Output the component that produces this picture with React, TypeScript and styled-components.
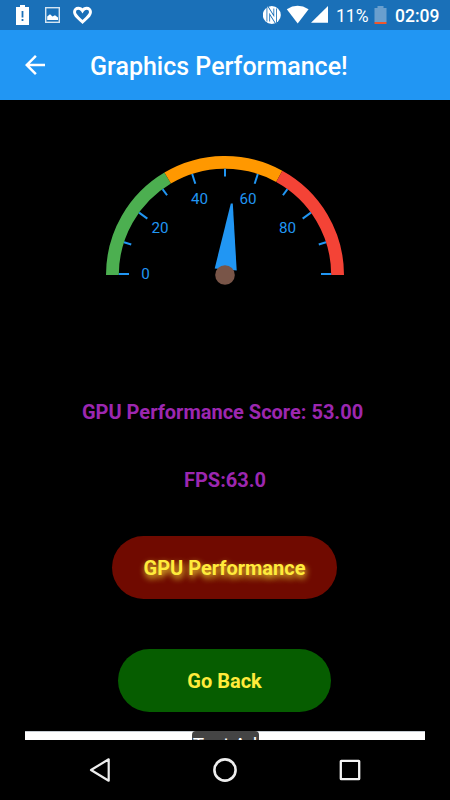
import React from "react";
import styled, { createGlobalStyle } from "styled-components";

const GlobalStyle = createGlobalStyle`
  * { box-sizing: border-box; }
  body { margin: 0; background: #000; font-family: Roboto, sans-serif; }
  svg { display: block; flex: none; }
`;

const Screen = styled.div`
  width: 450px;
  height: 800px;
  display: flex;
  flex-direction: column;
  overflow: hidden;
  background: #000;
`;

const StatusBar = styled.header`
  height: 30px;
  flex: none;
  display: flex;
  align-items: center;
  justify-content: space-between;
  padding: 0 10px 0 15px;
  background: #1a70b8;
  color: #fff;
`;

const StatusGroup = styled.div`
  display: flex;
  align-items: center;
`;

const StatusText = styled.span<{ $width: number; $weight: number; $left: number }>`
  width: ${(p) => p.$width}px;
  margin-left: ${(p) => p.$left}px;
  font-size: 17.5px;
  font-weight: ${(p) => p.$weight};
  line-height: 30px;
  padding-top: 1px;
  white-space: nowrap;
`;

const AppBar = styled.div`
  height: 70px;
  flex: none;
  display: flex;
  align-items: center;
  padding-left: 20px;
  background: #2196f3;
  color: #fff;
`;

const IconButton = styled.button`
  width: 30px;
  height: 30px;
  padding: 0;
  border: 0;
  background: none;
`;

const Title = styled.h1`
  margin: 3px 0 0 40px;
  font-size: 25px;
  font-weight: 500;
  line-height: 30px;
  white-space: nowrap;
`;

const Content = styled.main`
  height: 640px;
  flex: none;
  display: flex;
  flex-direction: column;
  align-items: center;
  overflow: hidden;
`;

const GaugeArea = styled.div`
  height: 297px;
  flex: none;
`;

const Stat = styled.p<{ $gap: number; $shift?: number }>`
  margin: 0 ${(p) => p.$shift ?? 0}px ${(p) => p.$gap}px 0;
  font-size: 20px;
  font-weight: 700;
  line-height: 30px;
  color: #9c27b0;
  white-space: nowrap;
`;

const PillButton = styled.button<{ $width: number; $color: string; $gap: number; $glow?: boolean }>`
  width: ${(p) => p.$width}px;
  height: 63px;
  flex: none;
  margin: 0 1px ${(p) => p.$gap}px 0;
  padding: 0;
  border: 0;
  border-radius: 38px;
  background: ${(p) => p.$color};
  color: #ffeb3b;
  font: 700 20px/64px Roboto, sans-serif;
  text-shadow: ${(p) => (p.$glow ? "1px 3px 6px #ffeb3b" : "none")};
`;

const AdBanner = styled.div`
  width: 400px;
  height: 62px;
  flex: none;
  display: flex;
  justify-content: center;
  align-items: flex-start;
  border-top: 1px solid #c5cbd2;
  background: #fff;
`;

const AdLabel = styled.span`
  width: 67px;
  height: 26px;
  margin-top: -1px;
  border-radius: 4px 4px 0 0;
  background: #444;
  color: #fff;
  font-size: 19px;
  line-height: 27px;
  text-align: center;
  white-space: nowrap;
`;

const NavBar = styled.nav`
  height: 60px;
  flex: none;
  display: flex;
  align-items: center;
  justify-content: center;
  gap: 95px;
  background: #000;
`;

const CX = 225;
const CY = 175;

const polar = (value: number, radius: number) => {
  const a = (value / 100) * Math.PI;
  return { x: CX - radius * Math.cos(a), y: CY - radius * Math.sin(a) };
};

const arc = (from: number, to: number) => {
  const r = 112.6;
  const s = polar(from, r);
  const e = polar(to, r);
  return `M${s.x} ${s.y}A${r} ${r} 0 0 1 ${e.x} ${e.y}`;
};

const segments = [
  { from: 0, to: 33, color: "#4caf50" },
  { from: 33, to: 66, color: "#ff9800" },
  { from: 66, to: 100, color: "#f44336" },
];

const labels = [
  { text: "0", x: 145.5, y: 179 },
  { text: "20", x: 160, y: 132.5 },
  { text: "40", x: 199.5, y: 104 },
  { text: "60", x: 248, y: 104 },
  { text: "80", x: 287.5, y: 132.5 },
];

function Gauge() {
  return (
    <svg width="450" height="200" viewBox="0 0 450 200">
      {segments.map((s) => (
        <path key={s.from} d={arc(s.from, s.to)} fill="none" stroke={s.color} strokeWidth="12.8" />
      ))}
      {Array.from({ length: 11 }, (_, i) => {
        const outer = polar(i * 10, 106.2);
        const inner = polar(i * 10, i % 2 ? 98.6 : 96);
        const lift = i % 10 === 0 ? 1 : 0;
        return (
          <line
            key={i}
            x1={outer.x}
            y1={outer.y - lift}
            x2={inner.x}
            y2={inner.y - lift}
            stroke="#2196f3"
            strokeWidth="2"
          />
        );
      })}
      {labels.map((l) => (
        <text key={l.text} x={l.x} y={l.y} fill="#2196f3" fontSize="15.2" fontFamily="Roboto, sans-serif" textAnchor="middle">
          {l.text}
        </text>
      ))}
      <path d="M230.8 103.5H232.8L236.7 170.6L214.7 168.5Z" fill="#2196f3" />
      <circle cx={CX} cy={CY} r="9.8" fill="#795548" />
    </svg>
  );
}

export default function App() {
  return (
    <>
      <GlobalStyle />
      <Screen>
        <StatusBar>
          <StatusGroup>
            <svg width="82" height="30" viewBox="15 0 82 30">
              <path d="M16 7H20V5H25V7H29V25H16Z" fill="#fff" />
              <path d="M22.5 11V17.5M22.5 19V21" stroke="#1a70b8" strokeWidth="1.8" />
              <rect x="45.7" y="7.7" width="13.6" height="14.6" fill="none" stroke="#d5e5f2" strokeWidth="1.4" />
              <path d="M47.2 20V16.5L50 14.3L52.5 16.5L55 15.3L58 17.5V20Z" fill="#fff" />
              <path
                d="M82.5 22L80.8 20.4C76.5 16.5 74.5 14.7 74.5 12C74.5 9.8 76.2 8.2 78.3 8.2C80 8.2 81.6 9.2 82.5 10.7C83.4 9.2 85 8.2 86.7 8.2C88.8 8.2 90.5 9.8 90.5 12C90.5 14.7 88.5 16.5 84.2 20.4Z"
                fill="none"
                stroke="#fff"
                strokeWidth="2.9"
              />
            </svg>
          </StatusGroup>
          <StatusGroup>
            <svg width="66" height="30" viewBox="263 0 66 30">
              <circle cx="271.8" cy="15" r="9" fill="#fff" />
              <path d="M268.3 21.5V9.5L275.2 20.5V8.5" fill="none" stroke="#1a70b8" strokeWidth="3.6" />
              <path d="M268.3 22.5V9.5L275.2 20.5V7.5" fill="none" stroke="#fff" strokeWidth="1.9" />
              <path d="M286.8 9.2Q297.5 2.5 308.6 9.2L297.7 23.6Z" fill="#fff" />
              <path d="M328 6V22.8H311Z" fill="#fff" />
            </svg>
            <StatusText $left={7} $width={38} $weight={400}>11%</StatusText>
            <svg width="13" height="30" viewBox="0 0 13 30">
              <path d="M.5 8H3.5V6H9.5V8H12.5V22H.5Z" fill="#6a9fce" />
              <path d="M.5 22H12.5V24H.5Z" fill="#f0562a" />
            </svg>
            <StatusText $left={8} $width={45} $weight={500}>02:09</StatusText>
          </StatusGroup>
        </StatusBar>
        <AppBar>
          <IconButton aria-label="Back">
            <svg width="30" height="30" viewBox="0 0 24 24">
              <path d="M20 11H7.83l5.59-5.59L12 4l-8 8 8 8 1.41-1.41L7.83 13H20v-2z" fill="#fff" />
            </svg>
          </IconButton>
          <Title>Graphics Performance!</Title>
        </AppBar>
        <Content>
          <GaugeArea>
            <Gauge />
          </GaugeArea>
          <Stat $gap={38} $shift={5}>GPU Performance Score: 53.00</Stat>
          <Stat $gap={41}>FPS:63.0</Stat>
          <PillButton $width={225} $color="#700a00" $gap={50} $glow>GPU Performance</PillButton>
          <PillButton $width={213} $color="#065d00" $gap={19}>Go Back</PillButton>
          <AdBanner>
            <AdLabel>Test Ad</AdLabel>
          </AdBanner>
        </Content>
        <NavBar>
          <svg width="30" height="30" viewBox="0 0 30 30">
            <path d="M6 15L23.7 4.3V25.7Z" fill="none" stroke="#eee" strokeWidth="2.2" strokeLinejoin="round" />
          </svg>
          <svg width="30" height="30" viewBox="0 0 30 30">
            <circle cx="15" cy="15" r="10.6" fill="none" stroke="#eee" strokeWidth="2.6" />
          </svg>
          <svg width="30" height="30" viewBox="0 0 30 30">
            <rect x="5.8" y="5.8" width="18.4" height="18.4" rx="0.5" fill="none" stroke="#f5f5f5" strokeWidth="2.3" />
          </svg>
        </NavBar>
      </Screen>
    </>
  );
}
